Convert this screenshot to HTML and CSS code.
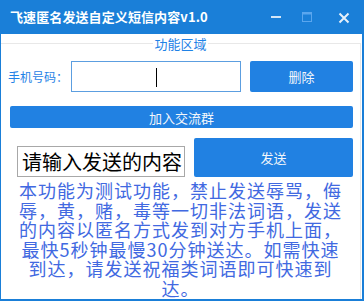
FILE: index.html
```html
<!DOCTYPE html>
<html>
<head>
<meta charset="utf-8">
<link rel="stylesheet" href="styles.css">
</head>
<body>
<div class="window">
  <div class="titlebar">
    <div class="title">飞速匿名发送自定义短信内容v1.0</div>
    <div class="controls">
      <svg class="ctl" width="12" height="12" viewBox="0 0 12 12"><rect x="1" y="5" width="10" height="2" fill="#d2e6f8"/></svg>
      <svg class="ctl max" width="12" height="12" viewBox="0 0 12 12"><rect x="1.5" y="1.5" width="9" height="9" fill="none" stroke="#5aa6ee" stroke-width="1"/><rect x="1" y="1" width="10" height="2.5" fill="#5aa6ee"/></svg>
      <svg class="ctl close" width="12" height="12" viewBox="0 0 12 12"><path d="M1.5 1.5 L10.5 10.5 M10.5 1.5 L1.5 10.5" stroke="#e6f0fa" stroke-width="2"/></svg>
    </div>
  </div>
  <div class="group">
    <div class="legend"><span>功能区域</span></div>
    <div class="row1">
      <div class="label">手机号码：</div>
      <div class="input"><span class="caret"></span></div>
      <div class="btn btn-del">删除</div>
    </div>
    <div class="btn btn-join">加入交流群</div>
    <div class="row3">
      <div class="msgbox">请输入发送的内容</div>
      <div class="btn btn-send">发送</div>
    </div>
    <div class="info">本功能为测试功能，禁止发送辱骂，侮<br>辱，黄，赌，毒等一切非法词语，发送<br>的内容以匿名方式发到对方手机上面，<br>最快5秒钟最慢30分钟送达。如需快速<br>到达，请发送祝福类词语即可快速到<br>达。</div>
  </div>
</div>
</body>
</html>
```

FILE: styles.css
```css
html, body {
  margin: 0;
  padding: 0;
  background: #ffffff;
}
body {
  font-family: "Noto Sans CJK SC", "Noto Sans", sans-serif;
}
.window {
  width: 364px;
  height: 301px;
  box-sizing: border-box;
  border-left: 1px solid #1a7fd8;
  border-right: 2px solid #1a7fd8;
  border-bottom: 2px solid #1a7fd8;
  background: #ffffff;
  overflow: hidden;
}
.titlebar {
  height: 34px;
  margin-left: -1px;
  margin-right: -2px;
  background: #1a7fd8;
  display: flex;
  align-items: center;
  padding-left: 10px;
}
.title {
  color: #ffffff;
  font-weight: bold;
  font-size: 13px;
  line-height: 16px;
  letter-spacing: 0.1px;
  flex: 1;
}
.controls {
  display: flex;
  align-items: center;
  margin-right: 14px;
}
.ctl {
  display: block;
}
.ctl.max {
  margin-left: 19px;
  margin-top: -1px;
}
.ctl.close {
  margin-left: 25px;
  margin-top: 1px;
}
.group {
  margin-top: 9px;
  margin-right: 1px;
  border-top: 1px solid #e8e8e8;
  border-right: 1px solid #e8e8e8;
  height: 260px;
}
.legend {
  margin-top: -8px;
  height: 15px;
  text-align: center;
  font-size: 13px;
  line-height: 15px;
  color: #1f82e6;
}
.legend span {
  background: #ffffff;
  padding: 0 1px;
}
.row1 {
  display: flex;
  align-items: center;
  margin-top: 10px;
  height: 31px;
}
.label {
  margin-left: 7px;
  width: 63px;
  flex-shrink: 0;
  white-space: nowrap;
  font-size: 12px;
  color: #1f82e6;
  line-height: 16px;
  margin-top: 1px;
}
.input {
  width: 170px;
  height: 31px;
  flex-shrink: 0;
  box-sizing: border-box;
  border: 1px solid #5c9ee0;
  display: flex;
  align-items: center;
  justify-content: center;
}
.caret {
  display: block;
  width: 1px;
  height: 19px;
  background: #000000;
  margin-top: 1px;
}
.btn {
  background: #2181e2;
  color: #f2f6fb;
  font-size: 13px;
  border-radius: 2px;
  display: flex;
  align-items: center;
  justify-content: center;
  box-sizing: border-box;
  flex-shrink: 0;
}
.btn-del {
  margin-left: 9px;
  width: 103px;
  height: 31px;
}
.btn-join {
  margin-top: 14px;
  margin-left: 9px;
  width: 343px;
  height: 22px;
}
.row3 {
  display: flex;
  align-items: flex-end;
  margin-top: 10px;
  height: 39px;
}
.msgbox {
  margin-left: 16px;
  width: 168px;
  height: 31px;
  flex-shrink: 0;
  box-sizing: border-box;
  border: 1px solid #a8a8a8;
  font-size: 20px;
  line-height: 29px;
  color: #000000;
  padding-left: 4px;
  white-space: nowrap;
  overflow: hidden;
}
.btn-send {
  margin-left: 9px;
  width: 159px;
  height: 39px;
}
.info {
  margin-top: 4px;
  text-align: center;
  font-size: 18px;
  letter-spacing: 1px;
  line-height: 19.6px;
  color: #4169e1;
  white-space: nowrap;
}
```
